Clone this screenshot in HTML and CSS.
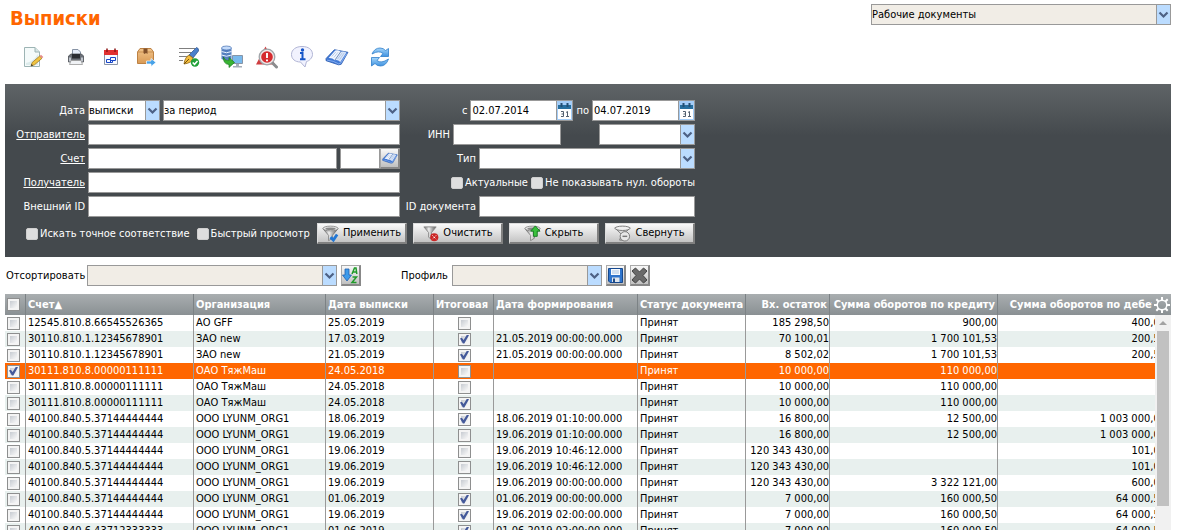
FILE: index.html
```html
<!DOCTYPE html>
<html lang="ru">
<head>
<meta charset="utf-8">
<title>Выписки</title>
<link rel="stylesheet" href="styles.css">
</head>
<body>
<svg class="defs" aria-hidden="true">
  <defs>
    <linearGradient id="metal" x1="0" x2="1"><stop offset="0" stop-color="#666"/><stop offset=".4" stop-color="#eee"/><stop offset="1" stop-color="#555"/></linearGradient>
    <linearGradient id="box" x1="0" y1="0" x2="0" y2="1"><stop offset="0" stop-color="#f1c48b"/><stop offset="1" stop-color="#d99a55"/></linearGradient>
    <linearGradient id="blue" x1="0" y1="0" x2="0" y2="1"><stop offset="0" stop-color="#a5d6fa"/><stop offset="1" stop-color="#3f92e0"/></linearGradient>
    <symbol id="book" viewBox="0 0 23 17">
      <path d="M1 10 9 1.500 22 4 15.500 15.500 13 16 1 12Z" fill="#3f78d6" stroke="#2c5db0" stroke-width=".8"/>
      <path d="M3.500 9.500 9.800 2.300Q13 1.500 15 3.500L9.500 11.500Q7 9.300 3.500 9.500Z" fill="#f1f6ff"/>
      <path d="M9.500 11.500 15 3.500Q18 2.500 20.500 4.200L14.700 13.200Q12.500 11 9.500 11.500Z" fill="#dbe7fb"/>
      <path d="M6.500 8 10.500 3.500M8.500 9 12.500 4M12 10.500 16.500 4.500M14 11 18.500 4.500" stroke="#a4bbdc" stroke-width=".7" fill="none"/>
      <path d="M9.500 11.500 15 3.500" stroke="#6f87ad" stroke-width=".8" fill="none"/>
      <path d="M2 11.500Q8 12 13 15L15 14.500 21 5" fill="none" stroke="#8fb5f2" stroke-width=".8"/>
    </symbol>
    <symbol id="funnel" viewBox="0 0 18 18">
      <path d="M1 4 7 11V16.500L11 14V11L17 4Z" fill="url(#metal)" stroke="#666" stroke-width=".7"/>
      <ellipse cx="9" cy="3.700" rx="8" ry="2.500" fill="#e9e9e9" stroke="#777" stroke-width=".8"/>
      <ellipse cx="9" cy="4" rx="5.500" ry="1.300" fill="#888"/>
    </symbol>
  </defs>
</svg>

<header class="top">
  <h1 class="title">Выписки</h1>
  <select class="field drop muted view-select" aria-label="Вид документов"><option>Рабочие документы</option></select>
</header>

<nav class="toolbar" aria-label="Действия">
  <button class="tool gap-l" aria-label="Редактировать"><svg width="24" height="24" viewBox="0 0 24 24"><path d="M3.500 2.500H14L18.500 7V21.500H3.500Z" fill="#f4fafa" stroke="#9db4b4"/><path d="M14 2.500V7H18.500" fill="#d5e5e5" stroke="#9db4b4"/><path d="M5 18Q12 17 17 9V20H5Z" fill="#dcebeb"/><path d="m10 21 1.200-3.500 7.500-6.500 2.300 2.300-7.500 6.500Z" fill="#f0c440" stroke="#a37a20" stroke-width=".8"/><path d="m18.700 11 1.300-1.200 2.300 2.300-1.300 1.200Z" fill="#e58a8a"/><path d="m10 21 .6-2 1.500 1.400Z" fill="#333"/></svg></button>
  <button class="tool" aria-label="Печать"><svg width="24" height="24" viewBox="0 0 24 24"><path d="M8.500 4.500H14L16.500 7V12H8.500Z" fill="#e5edfa" stroke="#8793a5"/><path d="M4.500 11 7 9H17.500L19.500 11V17H4.500Z" fill="#6b7078" stroke="#4c5057" stroke-width=".8"/><path d="M8 9H16V13.500H8Z" fill="#2a2d33"/><path d="M5 12.500H7V16.500H5ZM17 12.500H19V16.500H17Z" fill="#c0c5cd"/><path d="M7 15.500H17L18.500 19.500H5.500Z" fill="#f0f2f5" stroke="#999" stroke-width=".8"/></svg></button>
  <button class="tool" aria-label="Календарь"><svg width="24" height="24" viewBox="0 0 24 24"><path d="M5.500 6H18.500V19.500H5.500Z" fill="#f8faff" stroke="#8a94a8"/><path d="M5 5H19V10H5Z" fill="#e03030"/><path d="M8 3.500V7M16 3.500V7" stroke="#8d1414" stroke-width="1.500"/><path d="M7.500 17.500V14.500H11.500V12.500H16.500V15.500H13.500V17.500H7.500M11.500 14.500V17.500M11.500 15.500H14" fill="none" stroke="#1746c8"/></svg></button>
  <button class="tool" aria-label="Экспорт"><svg width="24" height="24" viewBox="0 0 24 24"><path d="M3.500 7 6 3.500H17L19.500 7V18.500H3.500Z" fill="url(#box)" stroke="#bd8244"/><path d="M3.500 7H19.500" stroke="#c98f50"/><path d="M9.500 3.500H13.500V9L12 8 10.500 9 9.500 8Z" fill="#81502b"/><path d="M12.500 16H17V13.500L22 17.500 17 21.500V19H12.500Z" fill="#48a2e8" stroke="#fff" stroke-width=".7"/></svg></button>
  <button class="tool gap-s" aria-label="Подписать"><svg width="24" height="24" viewBox="0 0 24 24"><path d="M2 3.500H18M2 7.500H14M2 11.500H11M2 15.500H6" stroke="#7f7f7f"/><path d="m12 10 7.500-7.500Q22 3 21.500 6L16 13Z" fill="#4a80cc" stroke="#234b88" stroke-width=".7"/><path d="M7 19Q8 12 12 10L16 13Q15 18 7 19Z" fill="#f3bd3e" stroke="#8c6415" stroke-width=".8"/><path d="m7 19 5-5" stroke="#75500b"/><circle cx="18" cy="17.500" r="4.200" fill="#22a13a"/><path d="m15.700 17.500 1.800 1.800 3-3.300" fill="none" stroke="#fff" stroke-width="1.600"/></svg></button>
  <button class="tool gap-s" aria-label="Запросить"><svg width="24" height="24" viewBox="0 0 24 24"><path d="M1.500 3V14Q6.500 16.500 11.500 14V3Z" fill="#5580c0"/><ellipse cx="6.500" cy="3" rx="5" ry="2" fill="#c3dafa" stroke="#456fb0" stroke-width=".7"/><path d="M1.500 6.500Q6.500 9 11.500 6.500M1.500 10Q6.500 12.500 11.500 10" stroke="#e9f2ff" fill="none"/><path d="M12.500 10.500H22.500V18.500H12.500Z" fill="#78b9ed" stroke="#8795a7"/><path d="M16 19H19V21H22V22.500H13V21H16Z" fill="#a5adb8"/><path d="M3.500 12Q5 16 9 15.500V12.500L14.500 17.500 9 22.500V19.500Q3 19 3.500 12Z" fill="#39b432" stroke="#16771d" stroke-width=".7"/></svg></button>
  <button class="tool" aria-label="Поиск ошибок"><svg width="24" height="24" viewBox="0 0 24 24"><path d="M10.500 1.500 20 19.500H1Z" fill="#cf3d40"/><circle cx="12" cy="12" r="7.800" fill="#f0e8e8" stroke="#a1a5a9" stroke-width="1.300"/><circle cx="12" cy="12" r="5.800" fill="#d52b2f"/><path d="M12 8V13M12 14.500V16.200" stroke="#fff" stroke-width="1.900"/><path d="m18 18.500 3.500 3.500" stroke="#8b8d8f" stroke-width="3" stroke-linecap="round"/></svg></button>
  <button class="tool" aria-label="Информация"><svg width="24" height="24" viewBox="0 0 24 24"><path d="M12 1.500C18.500 1.500 22.500 4.500 22.500 9.500 22.500 13 19 16 16.500 16.500L15 22 10.500 17C5 17 1.500 14 1.500 9.500 1.500 4.500 6 1.500 12 1.500Z" fill="#f1f2fe" stroke="#b1b5d5"/><circle cx="12.500" cy="5" r="1.700" fill="#1554c8"/><path d="M10 8H12.500V14M10 14.200H15.500" stroke="#1554c8" stroke-width="2" fill="none"/></svg></button>
  <button class="tool gap-r" aria-label="Справочник"><svg width="24" height="18"><use href="#book"/></svg></button>
  <button class="tool" aria-label="Обновить"><svg width="24" height="24" viewBox="0 0 24 24"><path d="M4 9Q6.500 3 12 3 15.500 3 17.500 5.500L20.500 3.500V11.500H12.500L15 8.500Q11 5 4 9Z" fill="url(#blue)" stroke="#2f7dca" stroke-width=".8"/><path d="M20.500 14Q18 21 12.500 21 9 21 7 18.500L3.500 21V12.500H11.500L9 15.500Q13 19 20.500 14Z" fill="url(#blue)" stroke="#2f7dca" stroke-width=".8"/></svg></button>
</nav>

<form class="filter">
  <div class="filter-body">
    <div class="row">
      <div class="left"><label class="lbl" for="dkind">Дата</label><select id="dkind" class="field drop kind"><option>выписки</option></select><select class="field drop grow" aria-label="Период"><option>за период</option></select></div>
      <div class="right"><label for="from">с</label><span class="date"><input id="from" class="field grow" value="02.07.2014"><button type="button" class="cal" aria-label="Выбрать дату"><svg width="15" height="19" viewBox="0 0 15 19"><path d="M0 0H15V19H0Z" fill="#a4cdf8"/><path d="M1 8H14V18H1Z" fill="#fff"/><path d="M1 4H14V8H1Z" fill="#276f9f"/><path d="M4.500 2V6M10.500 2V6" stroke="#244f73" stroke-width="2"/><path d="M4 10.500H6.500V15.500H4M4.500 13H6.500M9 11.500 10.500 10.500V15.500M9 15.500H12" fill="none" stroke="#536070"/></svg></button></span><label for="to">по</label><span class="date"><input id="to" class="field grow" value="04.07.2019"><button type="button" class="cal" aria-label="Выбрать дату"><svg width="15" height="19" viewBox="0 0 15 19"><path d="M0 0H15V19H0Z" fill="#a4cdf8"/><path d="M1 8H14V18H1Z" fill="#fff"/><path d="M1 4H14V8H1Z" fill="#276f9f"/><path d="M4.500 2V6M10.500 2V6" stroke="#244f73" stroke-width="2"/><path d="M4 10.500H6.500V15.500H4M4.500 13H6.500M9 11.500 10.500 10.500V15.500M9 15.500H12" fill="none" stroke="#536070"/></svg></button></span></div>
    </div>
    <div class="row">
      <div class="left"><label class="lbl link" for="sender">Отправитель</label><input id="sender" class="field grow"></div>
      <div class="right"><label for="inn">ИНН</label><input id="inn" class="field inn"><select class="field drop inn-kind" aria-label="Значение ИНН"><option></option></select></div>
    </div>
    <div class="row">
      <div class="left"><label class="lbl link" for="acc">Счет</label><input id="acc" class="field grow"><span class="code"><input class="field code-input" aria-label="Код валюты"><button type="button" class="sq" aria-label="Выбрать счет"><svg width="16" height="12"><use href="#book"/></svg></button></span></div>
      <div class="right"><label for="type">Тип</label><select id="type" class="field drop wide"><option></option></select></div>
    </div>
    <div class="row">
      <div class="left"><label class="lbl link" for="recv">Получатель</label><input id="recv" class="field grow"></div>
      <div class="right"><label class="tick"><input type="checkbox" class="cb-f">Актуальные</label><label class="tick"><input type="checkbox" class="cb-f">Не показывать нул. обороты</label></div>
    </div>
    <div class="row">
      <div class="left"><label class="lbl" for="ext">Внешний ID</label><input id="ext" class="field grow"></div>
      <div class="right"><label for="docid">ID документа</label><input id="docid" class="field wide"></div>
    </div>
    <div class="row actions">
      <label class="tick"><input type="checkbox" class="cb-f">Искать точное соответствие</label>
      <label class="tick"><input type="checkbox" class="cb-f">Быстрый просмотр</label>
      <div class="btns">
        <button type="button" class="btn"><svg width="17" height="17" viewBox="0 0 18 18"><use href="#funnel"/><path d="m9 13 3 3 4-6" fill="none" stroke="#2277d4" stroke-width="3"/></svg>Применить</button>
        <button type="button" class="btn"><svg width="17" height="17" viewBox="0 0 18 18"><path d="M2 2H15L10 8V15L7 13V8Z" fill="url(#metal)" stroke="#888"/><circle cx="13" cy="13" r="4.300" fill="#cb2525"/><path d="m11 11 4 4M15 11l-4 4" stroke="#fff" stroke-dasharray="1.500 1"/></svg>Очистить</button>
        <button type="button" class="btn"><svg width="17" height="17" viewBox="0 0 18 18"><use href="#funnel"/><path d="M12 1 17 6.500H14V12H10V6.500H7Z" fill="#39c13c" stroke="#177824"/></svg>Скрыть</button>
        <button type="button" class="btn"><svg width="17" height="17" viewBox="0 0 18 18"><path d="M1 3 8 10 6 16H12L11 9 17 3Z" fill="#ddd" stroke="#777"/><ellipse cx="9" cy="3.500" rx="8" ry="2.300" fill="#eee" stroke="#777"/><circle cx="11.500" cy="12" r="5" fill="#e7e7e7" stroke="#777"/><path d="M9 12H14" stroke="#777" stroke-width="1.500"/></svg>Свернуть</button>
      </div>
    </div>
  </div>
</form>

<div class="sortbar">
  <label class="sort-label" for="sort">Отсортировать</label><select id="sort" class="field drop muted sort"><option></option></select><button class="sq" aria-label="Сортировать"><svg width="17" height="17" viewBox="0 0 17 17"><path d="M3 2H7V8H9.500L5 14 .5 8H3Z" fill="#3e9bea" stroke="#1f60b0" stroke-width=".8"/><path d="m10 7 2.500-6H14L14.800 7M11 5H14M10.500 10H14.500L10 15.500H14.500" fill="none" stroke="#209a2a" stroke-width="1.500"/></svg></button>
  <label class="prof-label" for="prof">Профиль</label><select id="prof" class="field drop muted prof"><option></option></select><button class="sq" aria-label="Сохранить"><svg width="17" height="17" viewBox="0 0 17 17"><path d="M1.500 1.500H15.500V15.500H3L1.500 14Z" fill="#2e74cc" stroke="#16488e"/><path d="M4 2H13V8H4Z" fill="#f6faff"/><path d="M5 4H12M5 6H12" stroke="#aac3df"/><path d="M5 10.500H12.500V15H5Z" fill="#dfe6ee"/><path d="M6 11.500H8V15H6Z" fill="#234c84"/></svg></button><button class="sq" aria-label="Удалить"><svg width="17" height="17" viewBox="0 0 17 17"><path d="M1 4 4.500 1 8.500 5 12.500 1 16 4 12 8.500 16 13 12.500 16 8.500 12 4.500 16 1 13 5 8.500Z" fill="#6a6a6a" stroke="#444"/></svg></button>
</div>

<main class="grid">
  <table class="tbl">
    <colgroup><col class="c-tick"><col class="c-acc"><col class="c-org"><col class="c-date"><col class="c-fin"><col class="c-time"><col class="c-stat"><col class="c-in"><col class="c-cr"><col></colgroup>
    <thead><tr><th><input type="checkbox" class="cb" aria-label="Выбрать все"></th><th>Счет▲</th><th>Организация</th><th>Дата выписки</th><th>Итоговая</th><th>Дата формирования</th><th>Статус документа</th><th class="n">Вх. остаток</th><th class="n">Сумма оборотов по кредиту</th><th class="n">Сумма оборотов по дебету</th></tr></thead>
    <tbody>
      <tr><td><input type="checkbox" class="cb" aria-label="Строка 1"></td><td>12545.810.8.66545526365</td><td>АО GFF</td><td>25.05.2019</td><td class="m"><input type="checkbox" class="cb" aria-label="Итоговая"></td><td></td><td>Принят</td><td class="n">185 298,50</td><td class="n">900,00</td><td class="n">400,00</td></tr>
      <tr><td><input type="checkbox" class="cb" aria-label="Строка 2"></td><td>30110.810.1.12345678901</td><td>ЗАО new</td><td>17.03.2019</td><td class="m"><input type="checkbox" class="cb" aria-label="Итоговая" checked></td><td>21.05.2019 00:00:00.000</td><td>Принят</td><td class="n">70 100,01</td><td class="n">1 700 101,53</td><td class="n">200,50</td></tr>
      <tr><td><input type="checkbox" class="cb" aria-label="Строка 3"></td><td>30110.810.1.12345678901</td><td>ЗАО new</td><td>21.05.2019</td><td class="m"><input type="checkbox" class="cb" aria-label="Итоговая" checked></td><td>21.05.2019 00:00:00.000</td><td>Принят</td><td class="n">8 502,02</td><td class="n">1 700 101,53</td><td class="n">200,50</td></tr>
      <tr class="sel"><td><input type="checkbox" class="cb" aria-label="Строка 4" checked></td><td>30111.810.8.00000111111</td><td>ОАО ТяжМаш</td><td>24.05.2018</td><td class="m"><input type="checkbox" class="cb" aria-label="Итоговая"></td><td></td><td>Принят</td><td class="n">10 000,00</td><td class="n">110 000,00</td><td class="n"></td></tr>
      <tr><td><input type="checkbox" class="cb" aria-label="Строка 5"></td><td>30111.810.8.00000111111</td><td>ОАО ТяжМаш</td><td>24.05.2018</td><td class="m"><input type="checkbox" class="cb" aria-label="Итоговая"></td><td></td><td>Принят</td><td class="n">10 000,00</td><td class="n">110 000,00</td><td class="n"></td></tr>
      <tr><td><input type="checkbox" class="cb" aria-label="Строка 6"></td><td>30111.810.8.00000111111</td><td>ОАО ТяжМаш</td><td>24.05.2018</td><td class="m"><input type="checkbox" class="cb" aria-label="Итоговая" checked></td><td></td><td>Принят</td><td class="n">10 000,00</td><td class="n">110 000,00</td><td class="n"></td></tr>
      <tr><td><input type="checkbox" class="cb" aria-label="Строка 7"></td><td>40100.840.5.37144444444</td><td>ООО LYUNM_ORG1</td><td>18.06.2019</td><td class="m"><input type="checkbox" class="cb" aria-label="Итоговая" checked></td><td>18.06.2019 01:10:00.000</td><td>Принят</td><td class="n">16 800,00</td><td class="n">12 500,00</td><td class="n">1 003 000,00</td></tr>
      <tr><td><input type="checkbox" class="cb" aria-label="Строка 8"></td><td>40100.840.5.37144444444</td><td>ООО LYUNM_ORG1</td><td>19.06.2019</td><td class="m"><input type="checkbox" class="cb" aria-label="Итоговая"></td><td>19.06.2019 01:10:00.000</td><td>Принят</td><td class="n">16 800,00</td><td class="n">12 500,00</td><td class="n">1 003 000,00</td></tr>
      <tr><td><input type="checkbox" class="cb" aria-label="Строка 9"></td><td>40100.840.5.37144444444</td><td>ООО LYUNM_ORG1</td><td>19.06.2019</td><td class="m"><input type="checkbox" class="cb" aria-label="Итоговая"></td><td>19.06.2019 10:46:12.000</td><td>Принят</td><td class="n">120 343 430,00</td><td class="n"></td><td class="n">101,00</td></tr>
      <tr><td><input type="checkbox" class="cb" aria-label="Строка 10"></td><td>40100.840.5.37144444444</td><td>ООО LYUNM_ORG1</td><td>19.06.2019</td><td class="m"><input type="checkbox" class="cb" aria-label="Итоговая"></td><td>19.06.2019 10:46:12.000</td><td>Принят</td><td class="n">120 343 430,00</td><td class="n"></td><td class="n">101,00</td></tr>
      <tr><td><input type="checkbox" class="cb" aria-label="Строка 11"></td><td>40100.840.5.37144444444</td><td>ООО LYUNM_ORG1</td><td>19.06.2019</td><td class="m"><input type="checkbox" class="cb" aria-label="Итоговая"></td><td>19.06.2019 00:00:00.000</td><td>Принят</td><td class="n">120 343 430,00</td><td class="n">3 322 121,00</td><td class="n">600,00</td></tr>
      <tr><td><input type="checkbox" class="cb" aria-label="Строка 12"></td><td>40100.840.5.37144444444</td><td>ООО LYUNM_ORG1</td><td>01.06.2019</td><td class="m"><input type="checkbox" class="cb" aria-label="Итоговая" checked></td><td>01.06.2019 00:00:00.000</td><td>Принят</td><td class="n">7 000,00</td><td class="n">160 000,50</td><td class="n">64 000,50</td></tr>
      <tr><td><input type="checkbox" class="cb" aria-label="Строка 13"></td><td>40100.840.5.37144444444</td><td>ООО LYUNM_ORG1</td><td>19.06.2019</td><td class="m"><input type="checkbox" class="cb" aria-label="Итоговая" checked></td><td>19.06.2019 02:00:00.000</td><td>Принят</td><td class="n">7 000,00</td><td class="n">160 000,50</td><td class="n">64 000,50</td></tr>
      <tr><td><input type="checkbox" class="cb" aria-label="Строка 14"></td><td>40100.840.6.43712333333</td><td>ООО LYUNM_ORG1</td><td>01.06.2019</td><td class="m"><input type="checkbox" class="cb" aria-label="Итоговая" checked></td><td>01.06.2019 02:00:00.000</td><td>Принят</td><td class="n">7 000,00</td><td class="n">160 000,50</td><td class="n">64 000,50</td></tr>
    </tbody>
  </table>
  <button class="gear" aria-label="Настройка колонок"><svg width="18" height="18" viewBox="0 0 18 18"><circle cx="9" cy="9" r="4.800" fill="none" stroke="#fff" stroke-width="1.500"/><path d="M9 1V4M9 14V17M1 9H4M14 9H17M3.300 3.300 5.500 5.500M12.500 12.500 14.700 14.700M14.700 3.300 12.500 5.500M5.500 12.500 3.300 14.700" stroke="#fff" stroke-width="2"/></svg></button>
  <div class="scroll"><span class="scroll-up"></span><span class="scroll-thumb"></span></div>
</main>
</body>
</html>
```

FILE: styles.css
```css
* { box-sizing: border-box; }

body {
  margin: 0;
  height: 100vh;
  padding: 0 6px 0 5px;
  display: flex;
  flex-direction: column;
  overflow: hidden;
  background: #fff;
  color: #000;
  font: 11px/16px "DejaVu Sans Condensed", "Noto Sans", sans-serif;
}

button, input, select { font: inherit; color: inherit; margin: 0; }
button { padding: 0; border: 0; background: none; }
svg { display: block; flex: none; }
.defs { position: absolute; width: 0; height: 0; }

.top {
  display: flex;
  justify-content: space-between;
  align-items: flex-start;
  padding: 4px 0 0 5px;
}
.title {
  margin: 0;
  color: #f60;
  font-size: 20px;
  line-height: 28px;
  font-weight: bold;
}

.toolbar {
  display: flex;
  gap: 11px;
  height: 24px;
  margin: 13px 0 15px 16px;
}
.tool { display: flex; align-items: center; justify-content: center; width: 24px; }
.gap-l { margin-right: 8px; }
.gap-s { margin-left: 8px; }
.gap-r { margin-right: 8px; }

.field {
  height: 21px;
  min-width: 0;
  padding: 0 1px;
  border: 1px solid #999;
  border-radius: 0;
  outline: 0;
  background: #fff;
  color: #000;
}
.drop {
  appearance: none;
  padding: 0 16px 0 0;
  background: #fff url("data:image/svg+xml,%3Csvg xmlns='http://www.w3.org/2000/svg' width='14' height='19'%3E%3Cpath d='M0 0H14V19H0Z' fill='%23bbdcff'/%3E%3Cpath d='M.5 0V19' stroke='%23999'/%3E%3Cpath d='M3.500 7.500 7.500 11.500 11.500 7.500' fill='none' stroke='%234d6185' stroke-width='2.200'/%3E%3C/svg%3E") no-repeat right center;
}
.muted { background-color: #f1ede6; }
.view-select { width: 300px; }
.grow { flex: 1; width: 0; }

.filter {
  padding: 16px 0 13px;
  background: linear-gradient(#5f6467, #44494d 52px);
  color: #fff;
}
.filter-body { width: 690px; display: flex; flex-direction: column; gap: 3px; }
.row { display: flex; align-items: center; justify-content: space-between; height: 21px; }
.left { display: flex; align-items: center; gap: 3px; width: 395px; }
.right { display: flex; align-items: center; justify-content: flex-end; gap: 3px; }
.lbl { width: 80px; text-align: right; }
.link { text-decoration: underline; }
.kind { width: 72px; }
.date { display: flex; width: 103px; }
.cal { border: 1px solid #999; border-left: 0; }
.inn { width: 108px; }
.inn-kind { width: 96px; margin-left: 35px; }
.code { display: flex; width: 60px; }
.code-input { width: 40px; }
.wide { width: 216px; }
.tick { display: flex; align-items: center; gap: 2px; white-space: nowrap; }

.actions { justify-content: flex-start; gap: 7px; margin-top: 3px; padding-left: 21px; }
.btns { display: flex; gap: 6px; margin-left: auto; }
.btn {
  display: flex;
  align-items: center;
  justify-content: center;
  gap: 4px;
  width: 90px;
  height: 21px;
  border: 1px solid;
  border-width: 1px 2px 2px 1px;
  border-color: #ddd #808080 #808080 #ddd;
  background: linear-gradient(#fafafa, #c4c4c4);
  color: #000;
}
.sq {
  display: flex;
  align-items: center;
  justify-content: center;
  width: 20px;
  height: 21px;
  border: 1px solid;
  border-width: 1px 2px 2px 1px;
  border-color: #aaa #888 #888 #aaa;
  background: linear-gradient(#f8f8f8, #c0c0c0);
}

.cb-f, .cb { appearance: none; }
.cb-f {
  width: 12px;
  height: 12px;
  border: 1px solid #cfcfcf;
  border-radius: 2px;
  background: #dedede;
}
.cb {
  display: block;
  position: relative;
  width: 13px;
  height: 13px;
  border: 1px solid #8e8f8f;
  background: linear-gradient(135deg, #b8bec6, #f8f8f8 80%);
  box-shadow: inset 0 0 0 2px #f4f4f4;
}
.cb:checked::before {
  content: "";
  position: absolute;
  inset: 1px;
  background: #44599a;
  clip-path: polygon(0 45%, 20% 35%, 40% 60%, 78% 0, 100% 8%, 48% 100%, 32% 100%);
}

.sortbar { display: flex; align-items: center; gap: 4px; padding: 8px 0 8px 1px; }
.sort-label { width: 77px; white-space: nowrap; }
.sort { width: 250px; }
.prof { width: 150px; }
.prof-label { width: 47px; margin-left: 36px; }

.grid {
  position: relative;
  flex: 1;
  min-height: 0;
  overflow: hidden;
  background: linear-gradient(#a9aeb0, #8a9093 21px, #fff 21px);
}
.tbl {
  width: calc(100% - 5px);
  table-layout: fixed;
  border-collapse: separate;
  border-spacing: 0;
}
.c-tick { width: 21px; }
.c-acc, .c-cr { width: 168px; }
.c-org { width: 132px; }
.c-date, .c-stat { width: 108px; }
.c-fin { width: 60px; }
.c-time { width: 144px; }
.c-in { width: 84px; }
.tbl th, .tbl td {
  height: 16px;
  padding: 0 0 0 2px;
  border-right: 1px solid #999;
  text-align: left;
  white-space: nowrap;
  overflow: hidden;
}
.tbl th { height: 21px; color: #fff; border-color: #7c8285; }
.tbl th:last-child, .tbl td:last-child { border-right: 0; }
.tbl .n { text-align: right; padding-left: 0; }
.tbl th.n { padding-right: 2px; }
.m .cb { margin: 0 auto; }
.tbl tbody tr { background: #fff; }
.tbl tbody tr:nth-child(even) { background: #e8f0ee; }
.tbl tbody tr.sel { background: #f60; color: #fff; }

.gear {
  position: absolute;
  top: 0;
  right: 0;
  display: flex;
  align-items: center;
  justify-content: center;
  width: 19px;
  height: 21px;
  background: linear-gradient(#a9aeb0, #8a9093);
}
.scroll {
  position: absolute;
  top: 21px;
  right: 0;
  bottom: 0;
  width: 16px;
  display: flex;
  flex-direction: column;
  align-items: center;
  background: #f1f1f1;
}
.scroll-up {
  margin: 6px 0;
  border: 4px solid transparent;
  border-top: 0;
  border-bottom-color: #a3a3a3;
}
.scroll-thumb { width: 12px; height: 88%; background: #c1c1c1; margin-bottom: 24px; }
```
